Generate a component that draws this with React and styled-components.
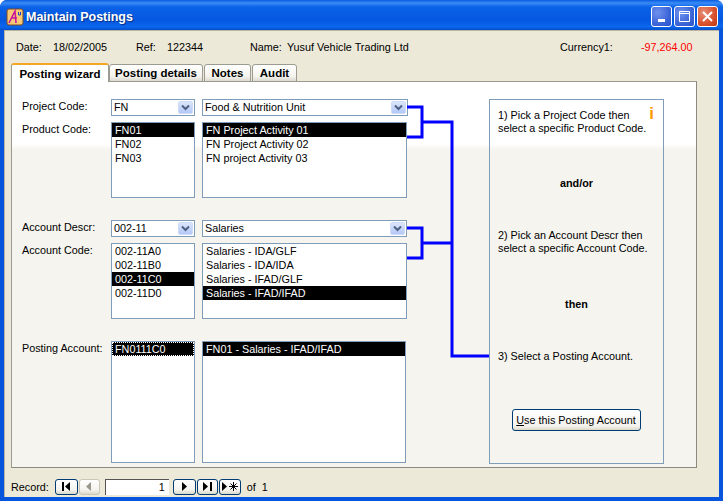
import React from 'react';
import styled, { createGlobalStyle } from 'styled-components';

const Global = createGlobalStyle`
  html, body { margin: 0; padding: 0; background: #fff; }
  body { width: 723px; height: 501px; overflow: hidden; font-family: "Liberation Sans", Arial, sans-serif; font-size: 10.8px; color: #000; }
`;

const Window = styled.div`
  width: 723px;
  height: 501px;
  box-sizing: border-box;
  display: flex;
  flex-direction: column;
  background: #0855dd;
  border-radius: 7px 7px 0 0;
  overflow: hidden;
`;

const TitleBar = styled.div`
  height: 30px;
  flex: none;
  display: flex;
  align-items: center;
  box-sizing: border-box;
  padding: 3px 5px 0 6px;
  background: linear-gradient(#0a5be0 0, #3a8cf5 3px, #0a62e8 7px, #0558e0 20px, #0a66ee 27px, #0450c8 30px);
`;

const Title = styled.div`
  margin-left: 2px;
  padding-top: 1px;
  flex: 1;
  color: #fff;
  font-size: 12.5px;
  font-weight: 700;
  text-shadow: 1px 1px 1px #0a2a80;
`;

const WinButton = styled.div`
  width: 21px;
  height: 21px;
  margin-left: 2px;
  box-sizing: border-box;
  border: 1px solid #fff;
  border-radius: 3px;
  display: flex;
  align-items: center;
  justify-content: center;
  background: ${p => p.$close
    ? 'radial-gradient(circle at 30% 30%, #e89078, #d8502c 60%, #c03810)'
    : 'radial-gradient(circle at 30% 30%, #6f90ee, #3c66d8 60%, #2a52c8)'};
`;

const Client = styled.div`
  flex: 1;
  margin: 0 4px 4px;
  background: #ece9d8;
  border-top: 1px solid #b8b4a0;
  border-left: 1px solid #b8b4a0;
  display: flex;
  flex-direction: column;
  min-height: 0;
  box-sizing: border-box;
`;

const InfoBar = styled.div`
  height: 32px;
  flex: none;
  display: flex;
  align-items: center;
  padding-bottom: 1px;
  box-sizing: border-box;
`;

const InfoText = styled.span`
  width: ${p => p.$w}px;
  flex: none;
  color: ${p => p.$red ? '#ff0000' : '#000'};
`;

const Tabs = styled.div`
  flex: none;
  height: 19px;
  margin-left: 6px;
  display: flex;
  align-items: flex-end;
  position: relative;
  z-index: 1;
`;

const Tab = styled.div`
  height: ${p => p.$active ? 19 : 18}px;
  width: ${p => p.$w}px;
  box-sizing: border-box;
  display: flex;
  align-items: center;
  justify-content: center;
  font-weight: 700;
  font-size: 11.5px;
  border: 1px solid #9c9b91;
  border-bottom: ${p => p.$active ? 'none' : '1px solid #9c9b91'};
  border-radius: 3px 3px 0 0;
  margin-right: ${p => p.$active ? 0 : 1}px;
  background: ${p => p.$active ? '#fff' : 'linear-gradient(#fff, #f4f3ee 70%, #dcdad0)'};
  border-top: ${p => p.$active ? '2px solid #f5a623' : '1px solid #9c9b91'};
`;

const Page = styled.div`
  position: relative;
  width: 686px;
  height: 387px;
  margin: -1px 0 0 6px;
  box-sizing: border-box;
  padding: 17px 0 0 10px;
  border: 1px solid #9c9b91;
  border-right-color: #8a897f;
  border-bottom-color: #8a897f;
  background: linear-gradient(#fff 0, #fff 62px, #f5f4ee 68px, #f5f4ee 100%);
  display: flex;
`;

const Form = styled.div`
  width: 456px;
  flex: none;
  display: flex;
  flex-direction: column;
`;

const Row = styled.div`
  display: flex;
  align-items: flex-start;
  margin-bottom: ${p => p.$gap || 0}px;
`;

const Label = styled.div`
  width: 89px;
  flex: none;
  line-height: 15px;
`;

const Combo = styled.div`
  width: ${p => p.$w}px;
  height: 17px;
  margin-right: 7px;
  flex: none;
  box-sizing: border-box;
  border: 1px solid #7f9db9;
  background: #fff;
  display: flex;
  align-items: center;
  padding: 0 1px 0 2px;
`;

const ComboText = styled.span`
  flex: 1;
  white-space: nowrap;
  padding-bottom: 1px;
`;

const ComboArrow = styled.div`
  width: 15px;
  height: 13px;
  box-sizing: border-box;
  background: linear-gradient(#dbe5fb, #b4c8f6);
  border: 1px solid #cfdcf8;
  border-radius: 2px;
  display: flex;
  align-items: center;
  justify-content: center;
`;

const List = styled.div`
  width: ${p => p.$w}px;
  height: ${p => p.$h}px;
  margin-right: 7px;
  flex: none;
  box-sizing: border-box;
  border: 1px solid #7f9db9;
  background: #fff;
`;

const Item = styled.div`
  height: 14px;
  line-height: 14px;
  padding-left: 3px;
  white-space: nowrap;
  background: ${p => p.$selected ? '#000' : 'transparent'};
  color: ${p => p.$selected ? '#fff' : '#000'};
  outline: ${p => p.$focus ? '1px dotted #fff' : 'none'};
  outline-offset: -1px;
`;

const Help = styled.div`
  position: relative;
  width: 175px;
  height: 365px;
  margin-left: 11px;
  flex: none;
  box-sizing: border-box;
  border: 1px solid #7f9db9;
  padding: 9px 8px 0 8px;
  display: flex;
  flex-direction: column;
  line-height: 13px;
`;

const Mark = styled.span`
  position: absolute;
  top: 5px;
  right: 9px;
  color: #ff9900;
  font-size: 17px;
  line-height: 18px;
  font-weight: 700;
`;

const Step = styled.div`
  height: ${p => p.$h}px;
  flex: none;
`;

const StepHead = styled.div`
  height: ${p => p.$h}px;
  flex: none;
  text-align: center;
  font-weight: 700;
`;

const UseButton = styled.button`
  align-self: center;
  margin: 46px 0 0 -1px;
  width: 129px;
  height: 22px;
  padding: 0;
  font: inherit;
  color: #000;
  border: 1px solid #003c74;
  border-radius: 3px;
  background: linear-gradient(#fff, #f4f3ee 80%, #dcd8c8);
`;

const Lines = styled.svg`
  position: absolute;
  left: 395px;
  top: 0;
  pointer-events: none;
`;

const Nav = styled.div`
  flex: 1;
  display: flex;
  align-items: center;
  padding: 8px 0 0 6px;
  box-sizing: border-box;
`;

const NavLabel = styled.span`
  margin: ${p => p.$m || '0'};
`;

const NavButton = styled.div`
  width: ${p => p.$w || 21}px;
  height: 16px;
  margin-right: 1px;
  box-sizing: border-box;
  border: 1px solid ${p => p.$off ? '#c9c7ba' : '#003c74'};
  border-radius: 3px;
  background: linear-gradient(#fff, #f4f3ee 70%, #dcd8c8);
  display: flex;
  align-items: center;
  justify-content: center;
`;

const RecordBox = styled.div`
  width: 64px;
  height: 16px;
  margin: 0 4px 0 4px;
  box-sizing: border-box;
  border-top: 1px solid #555;
  border-left: 1px solid #555;
  background: #fff;
  text-align: right;
  line-height: 15px;
  padding-right: 4px;
`;

const Chevron = () => (
  <svg width="9" height="7" viewBox="0 0 9 7">
    <path d="M1 1.5l3.5 3.5 3.5-3.5" fill="none" stroke="#4d6185" strokeWidth="2" />
  </svg>
);

const AppIcon = () => (
  <svg width="18" height="18" viewBox="0 0 18 18">
    <rect x="1" y="1" width="16" height="16" rx="2" fill="#f6c878" stroke="#7a4a20" />
    <path d="M3 15L9 3l1 12M5 10h6" fill="none" stroke="#c810a0" strokeWidth="1.5" />
    <path d="M12.5 4v3h2V4" fill="none" stroke="#2040c0" />
  </svg>
);

const App = () => (
  <Window>
    <Global />
    <TitleBar>
      <AppIcon />
      <Title>Maintain Postings</Title>
      <WinButton>
        <svg width="12" height="12" viewBox="0 0 12 12"><rect x="2" y="8" width="7" height="3" fill="#fff" /></svg>
      </WinButton>
      <WinButton>
        <svg width="13" height="13" viewBox="0 0 13 13"><path d="M1.5 3.5h10v8h-10zM1.5 1.5h10v2h-10z" fill="none" stroke="#fff" /></svg>
      </WinButton>
      <WinButton $close>
        <svg width="13" height="13" viewBox="0 0 13 13"><path d="M2 2l9 9M11 2l-9 9" stroke="#fff" strokeWidth="2" /></svg>
      </WinButton>
    </TitleBar>
    <Client>
      <InfoBar>
        <InfoText $w={11} />
        <InfoText $w={37}>Date:</InfoText>
        <InfoText $w={83}>18/02/2005</InfoText>
        <InfoText $w={31}>Ref:</InfoText>
        <InfoText $w={83}>122344</InfoText>
        <InfoText $w={37}>Name:</InfoText>
        <InfoText $w={273}>Yusuf Vehicle Trading Ltd</InfoText>
        <InfoText $w={81}>Currency1:</InfoText>
        <InfoText $red>-97,264.00</InfoText>
      </InfoBar>
      <Tabs>
        <Tab $active $w={98}>Posting wizard</Tab>
        <Tab $w={94}>Posting details</Tab>
        <Tab $w={47}>Notes</Tab>
        <Tab $w={45}>Audit</Tab>
      </Tabs>
      <Page>
        <Form>
          <Row $gap={6}>
            <Label>Project Code:</Label>
            <Combo $w={84}><ComboText>FN</ComboText><ComboArrow><Chevron /></ComboArrow></Combo>
            <Combo $w={206}><ComboText>Food &amp; Nutrition Unit</ComboText><ComboArrow><Chevron /></ComboArrow></Combo>
          </Row>
          <Row $gap={22}>
            <Label>Product Code:</Label>
            <List $w={84} $h={76}>
              <Item $selected>FN01</Item>
              <Item>FN02</Item>
              <Item>FN03</Item>
            </List>
            <List $w={205} $h={76}>
              <Item $selected>FN Project Activity 01</Item>
              <Item>FN Project Activity 02</Item>
              <Item>FN project Activity 03</Item>
            </List>
          </Row>
          <Row $gap={6}>
            <Label>Account Descr:</Label>
            <Combo $w={84}><ComboText>002-11</ComboText><ComboArrow><Chevron /></ComboArrow></Combo>
            <Combo $w={205}><ComboText>Salaries</ComboText><ComboArrow><Chevron /></ComboArrow></Combo>
          </Row>
          <Row $gap={22}>
            <Label>Account Code:</Label>
            <List $w={84} $h={76}>
              <Item>002-11A0</Item>
              <Item>002-11B0</Item>
              <Item $selected>002-11C0</Item>
              <Item>002-11D0</Item>
            </List>
            <List $w={205} $h={76}>
              <Item>Salaries - IDA/GLF</Item>
              <Item>Salaries - IDA/IDA</Item>
              <Item>Salaries - IFAD/GLF</Item>
              <Item $selected>Salaries - IFAD/IFAD</Item>
            </List>
          </Row>
          <Row>
            <Label>Posting Account:</Label>
            <List $w={84} $h={122}>
              <Item $selected $focus>FN0111C0</Item>
            </List>
            <List $w={204} $h={122}>
              <Item $selected>FN01 - Salaries - IFAD/IFAD</Item>
            </List>
          </Row>
        </Form>
        <Help>
          <Mark>i</Mark>
          <Step $h={68}>1) Pick a Project Code then<br />select a specific Product Code.</Step>
          <StepHead $h={52}>and/or</StepHead>
          <Step $h={69}>2) Pick an Account Descr then<br />select a specific Account Code.</Step>
          <StepHead $h={52}>then</StepHead>
          <Step $h={13}>3) Select a Posting Account.</Step>
          <UseButton><u>U</u>se this Posting Account</UseButton>
        </Help>
        <Lines width="90" height="300">
          <path
            d="M0 25H15V55H0M15 40H45V274H82M0 146H15V176H0M15 161H45"
            fill="none"
            stroke="#0000ff"
            strokeWidth="3"
          />
        </Lines>
      </Page>
      <Nav>
        <NavLabel $m="0 6px 0 0">Record:</NavLabel>
        <NavButton $w={23}>
          <svg width="11" height="9" viewBox="0 0 11 9"><path d="M1 0h2v9H1zM9 0v9L4 4.5z" /></svg>
        </NavButton>
        <NavButton $off>
          <svg width="6" height="9" viewBox="0 0 6 9"><path d="M5 0v9L0 4.5z" fill="#9a988c" /></svg>
        </NavButton>
        <RecordBox>1</RecordBox>
        <NavButton $w={23}>
          <svg width="6" height="9" viewBox="0 0 6 9"><path d="M1 0v9l5-4.5z" /></svg>
        </NavButton>
        <NavButton>
          <svg width="11" height="9" viewBox="0 0 11 9"><path d="M1 0v9l5-4.5zM8 0h2v9H8z" /></svg>
        </NavButton>
        <NavButton $w={22}>
          <svg width="18" height="11" viewBox="0 0 18 11"><path d="M1 1v9l5-4.5z" /><path d="M12.5 1v9M8 5.5h9M9.5 2.5l6 6M15.5 2.5l-6 6" stroke="#000" strokeWidth="1" fill="none" /></svg>
        </NavButton>
        <NavLabel $m="0 0 0 5px">of&nbsp;&nbsp;1</NavLabel>
      </Nav>
    </Client>
  </Window>
);

export default App;
